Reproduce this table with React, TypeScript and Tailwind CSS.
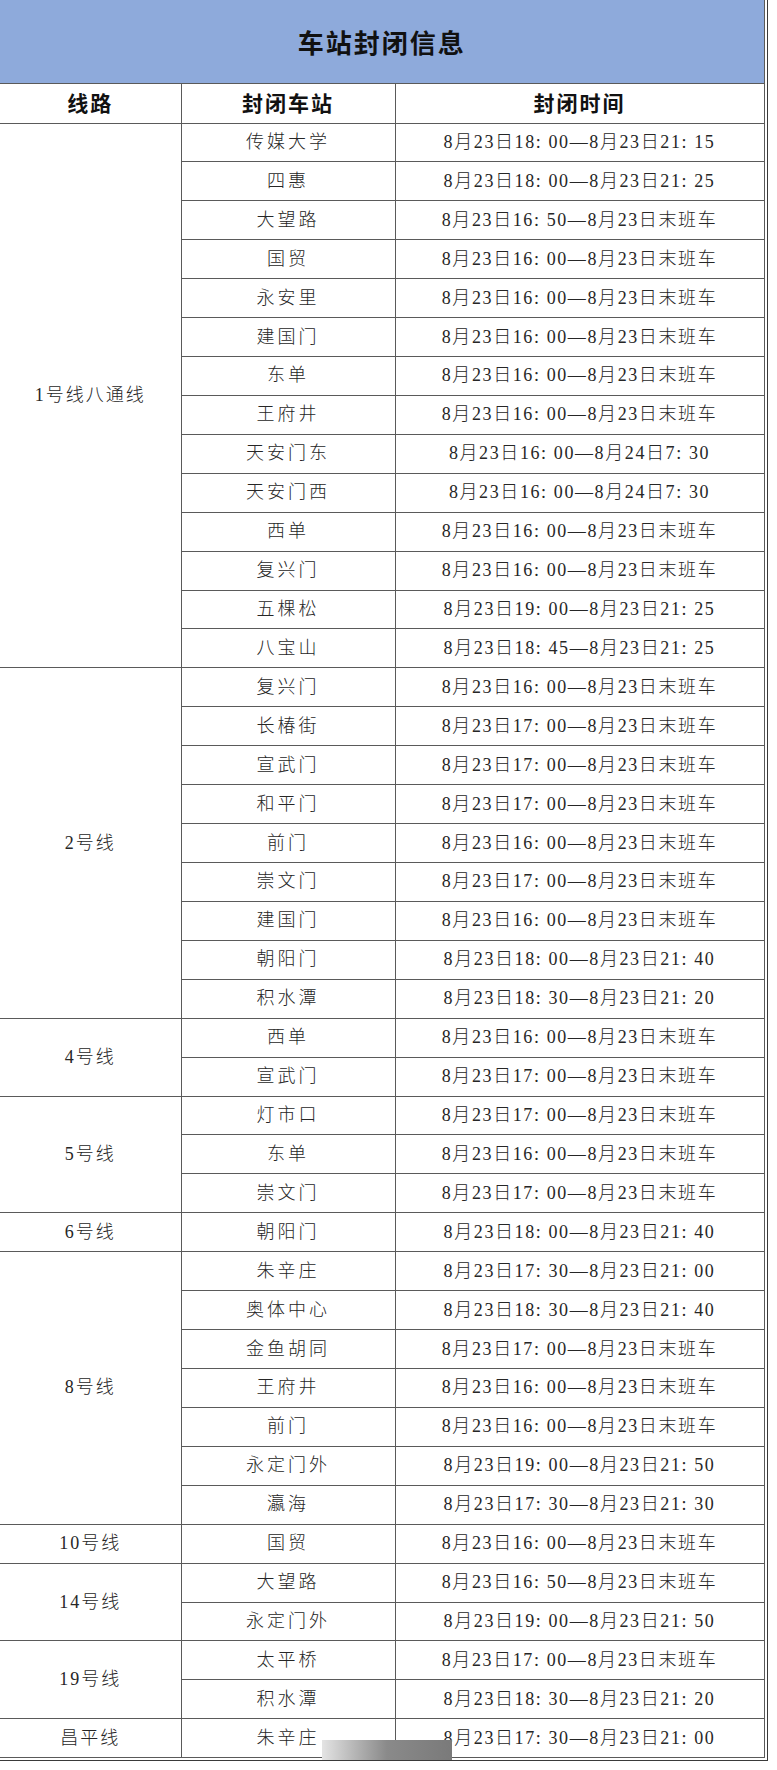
import React from 'react';

type Row = [string, string];

interface Group {
  line: string;
  rows: Row[];
}

const T16 = '8月23日16: 00—8月23日末班车';
const T17 = '8月23日17: 00—8月23日末班车';

const groups: Group[] = [
  {
    line: '1号线八通线',
    rows: [
      ['传媒大学', '8月23日18: 00—8月23日21: 15'],
      ['四惠', '8月23日18: 00—8月23日21: 25'],
      ['大望路', '8月23日16: 50—8月23日末班车'],
      ['国贸', T16],
      ['永安里', T16],
      ['建国门', T16],
      ['东单', T16],
      ['王府井', T16],
      ['天安门东', '8月23日16: 00—8月24日7: 30'],
      ['天安门西', '8月23日16: 00—8月24日7: 30'],
      ['西单', T16],
      ['复兴门', T16],
      ['五棵松', '8月23日19: 00—8月23日21: 25'],
      ['八宝山', '8月23日18: 45—8月23日21: 25'],
    ],
  },
  {
    line: '2号线',
    rows: [
      ['复兴门', T16],
      ['长椿街', T17],
      ['宣武门', T17],
      ['和平门', T17],
      ['前门', T16],
      ['崇文门', T17],
      ['建国门', T16],
      ['朝阳门', '8月23日18: 00—8月23日21: 40'],
      ['积水潭', '8月23日18: 30—8月23日21: 20'],
    ],
  },
  {
    line: '4号线',
    rows: [
      ['西单', T16],
      ['宣武门', T17],
    ],
  },
  {
    line: '5号线',
    rows: [
      ['灯市口', T17],
      ['东单', T16],
      ['崇文门', T17],
    ],
  },
  {
    line: '6号线',
    rows: [['朝阳门', '8月23日18: 00—8月23日21: 40']],
  },
  {
    line: '8号线',
    rows: [
      ['朱辛庄', '8月23日17: 30—8月23日21: 00'],
      ['奥体中心', '8月23日18: 30—8月23日21: 40'],
      ['金鱼胡同', T17],
      ['王府井', T16],
      ['前门', T16],
      ['永定门外', '8月23日19: 00—8月23日21: 50'],
      ['瀛海', '8月23日17: 30—8月23日21: 30'],
    ],
  },
  {
    line: '10号线',
    rows: [['国贸', T16]],
  },
  {
    line: '14号线',
    rows: [
      ['大望路', '8月23日16: 50—8月23日末班车'],
      ['永定门外', '8月23日19: 00—8月23日21: 50'],
    ],
  },
  {
    line: '19号线',
    rows: [
      ['太平桥', T17],
      ['积水潭', '8月23日18: 30—8月23日21: 20'],
    ],
  },
  {
    line: '昌平线',
    rows: [['朱辛庄', '8月23日17: 30—8月23日21: 00']],
  },
];

const serif = "font-['Liberation_Serif','Noto_Sans_CJK_SC',serif]";
const sans = "font-['Noto_Sans_CJK_SC','Noto_Sans',sans-serif]";

export default function App() {
  return (
    <div className="relative w-[768px] h-[1761px] bg-white border-r border-b border-[#3a3a3a]">
      <table className="w-[764px] table-fixed border-collapse">
        <colgroup>
          <col className="w-[181px]" />
          <col className="w-[214px]" />
          <col className="w-[369px]" />
        </colgroup>
        <thead>
          <tr>
            <th
              colSpan={3}
              className={`h-[83px] p-0 bg-[#8eaadb] border-b border-r border-[#5a5a5a] text-[26px] font-bold tracking-[2px] text-[#111] ${sans}`}
            >
              车站封闭信息
            </th>
          </tr>
          <tr className={`h-[40px] text-[21px] font-bold tracking-[2px] text-[#111] ${sans}`}>
            <th className="p-0 border-b border-r border-[#5a5a5a]">线路</th>
            <th className="p-0 border-b border-r border-[#5a5a5a]">封闭车站</th>
            <th className="p-0 border-b border-r border-[#5a5a5a]">封闭时间</th>
          </tr>
        </thead>
        <tbody className={`text-[18px] font-light text-[#262626] ${serif}`}>
          {groups.map((g) =>
            g.rows.map(([station, time], i) => (
              <tr key={g.line + station} className="h-[38.93px]">
                {i === 0 && (
                  <td
                    rowSpan={g.rows.length}
                    className="p-0 text-center align-middle tracking-[2px] border-b border-r border-[#5a5a5a]"
                  >
                    {g.line}
                  </td>
                )}
                <td className="p-0 text-center tracking-[3px] border-b border-r border-[#5a5a5a]">
                  {station}
                </td>
                <td className="p-0 text-center tracking-[1.6px] border-b border-r border-[#5a5a5a]">
                  {time}
                </td>
              </tr>
            ))
          )}
        </tbody>
      </table>
      {/* blurred watermark strip at the bottom */}
      <div className="absolute left-[322px] top-[1740px] w-[130px] h-[20px] bg-gradient-to-r from-[#e4e4e4] via-[#8a8a8a] to-[#7a7a7a]" />
    </div>
  );
}
